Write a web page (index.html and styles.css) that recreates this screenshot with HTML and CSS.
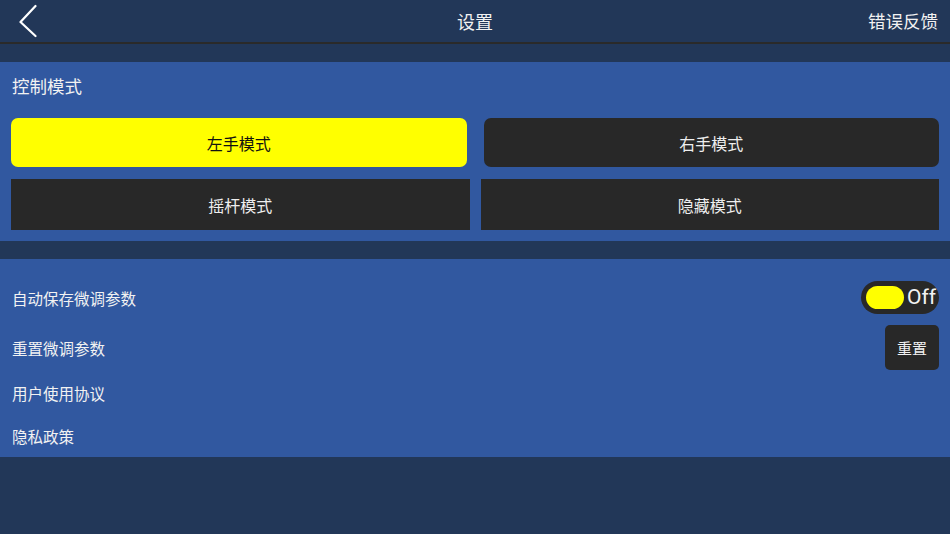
FILE: index.html
```html
<!DOCTYPE html>
<html lang="zh-CN">
<head>
<meta charset="utf-8">
<title>设置</title>
<link rel="stylesheet" href="styles.css">
</head>
<body>
<div class="app">
  <header class="topbar">
    <div class="back">
      <svg width="24" height="34" viewBox="0 0 24 34"><path d="M16.5 6 L1.5 22 L16.5 36" transform="translate(0,-4)" fill="none" stroke="#ffffff" stroke-width="2.2" stroke-linecap="round" stroke-linejoin="round"/></svg>
    </div>
    <div class="title">设置</div>
    <div class="feedback">错误反馈</div>
  </header>
  <div class="rule"></div>
  <div class="gap"></div>

  <section class="panel mode-panel">
    <div class="panel-title">控制模式</div>
    <div class="row row-a">
      <div class="btn btn-round btn-active">左手模式</div>
      <div class="btn btn-round">右手模式</div>
    </div>
    <div class="row row-b">
      <div class="btn btn-square">摇杆模式</div>
      <div class="btn btn-square">隐藏模式</div>
    </div>
  </section>

  <div class="gap"></div>

  <section class="panel list-panel">
    <div class="item item-toggle">
      <span class="label">自动保存微调参数</span>
      <div class="toggle"><span class="knob"></span><span class="toggle-text">Off</span></div>
    </div>
    <div class="item item-reset">
      <span class="label">重置微调参数</span>
      <div class="reset">重置</div>
    </div>
    <div class="item item-plain">
      <span class="label">用户使用协议</span>
    </div>
    <div class="item item-last">
      <span class="label">隐私政策</span>
    </div>
  </section>
</div>
</body>
</html>
```
FILE: styles.css
```css
* { box-sizing: border-box; }
html, body {
  margin: 0;
  padding: 0;
  background: #223758;
  width: 950px;
  height: 534px;
  overflow: hidden;
  font-family: "Noto Sans CJK SC", "Noto Sans", sans-serif;
  color: #f2f2f2;
}
.app { display: flex; flex-direction: column; }

.topbar {
  height: 42px;
  display: flex;
  align-items: center;
  justify-content: space-between;
  padding: 0 12px 0 19px;
  position: relative;
}
.back { width: 24px; height: 34px; display: flex; }
.title {
  position: absolute;
  left: 0;
  right: 0;
  text-align: center;
  font-size: 18px;
  line-height: 42px;
  pointer-events: none;
}
.feedback { font-size: 17.5px; line-height: 42px; }

.rule { height: 2px; background: #2a2a2a; }
.gap { height: 18px; }

.panel { background: #3158a0; }

.mode-panel { padding: 0 11px 11px 11px; }
.panel-title {
  height: 50px;
  line-height: 47px;
  font-size: 17.5px;
  padding-left: 1px;
}
.row { display: grid; grid-template-columns: 1fr 1fr; }
.row-a { margin-top: 6px; column-gap: 17px; }
.row-b { margin-top: 12px; column-gap: 11px; }
.btn {
  display: flex;
  align-items: center;
  justify-content: center;
  background: #282828;
  color: #eeeeee;
  font-size: 16px;
}
.row-a .btn { height: 49px; }
.row-b .btn { height: 51px; }
.btn-round { border-radius: 7px; }
.btn-square { border-radius: 0; }
.btn-active { background: #ffff00; color: #111111; }

.list-panel { padding: 22px 11px 0 12px; display: flex; flex-direction: column; }
.item {
  display: flex;
  align-items: center;
  justify-content: space-between;
}
.label { font-size: 15.5px; }
.item-toggle { height: 33px; }
.item-reset { height: 45px; margin-top: 11px; }
.item-plain { height: 45px; }
.item-last { height: 42px; }

.toggle {
  width: 78px;
  height: 33px;
  border-radius: 17px;
  background: #282828;
  display: flex;
  align-items: center;
  padding-left: 5px;
  gap: 3px;
}
.knob {
  width: 38px;
  height: 23px;
  border-radius: 12px;
  background: #ffff00;
}
.toggle-text {
  font-family: Roboto, "Noto Sans", sans-serif;
  font-size: 21px;
  color: #f2f2f2;
  line-height: 1;
}
.reset {
  width: 54px;
  height: 45px;
  border-radius: 5px;
  background: #282828;
  display: flex;
  align-items: center;
  justify-content: center;
  font-size: 15px;
}
```
